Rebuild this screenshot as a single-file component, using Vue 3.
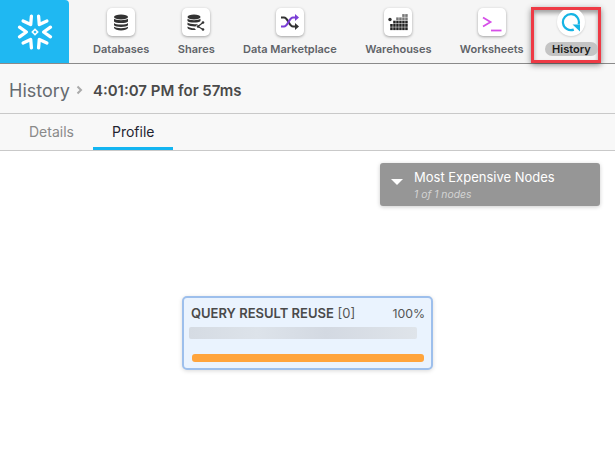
<script setup>
const items = [
  { name: 'Databases', icon: 'db' },
  { name: 'Shares', icon: 'share' },
  { name: 'Data Marketplace', icon: 'market' },
  { name: 'Warehouses', icon: 'wh' },
  { name: 'Worksheets', icon: 'ws' },
]
const cols = [2, 3, 4, 4, 5, 5]
</script>

<template>
  <div class="page">
    <nav class="nav">
      <div class="logo">
        <svg width="38" height="38" viewBox="-19 -19 38 38">
          <path
            v-for="a in [30, 90, 150, 210, 270, 330]"
            :key="a"
            :transform="`rotate(${a})`"
            d="M-4.8 -15.5 L0 -8.6 L4.8 -15.5"
            fill="none"
            stroke="#fff"
            stroke-width="3.3"
            stroke-linecap="round"
            stroke-linejoin="round"
          />
          <path d="M0 -3.8 L3.8 0 L0 3.8 L-3.8 0 Z M0 -1.6 L-1.6 0 L0 1.6 L1.6 0 Z" fill="#fff" fill-rule="evenodd" />
        </svg>
      </div>
      <div class="callout-shade"></div>
      <div class="items">
        <div v-for="item in items" :key="item.name" class="item">
          <div class="tile">
            <svg v-if="item.icon === 'db'" width="16" height="17" viewBox="0 0 16 17">
              <ellipse cx="8" cy="3" rx="7" ry="2.6" fill="#333" />
              <path d="M1 4.8 C2.5 6.6 13.5 6.6 15 4.8 V7.4 C13.5 9.6 2.5 9.6 1 7.4 Z M1 9 C2.5 11 13.5 11 15 9 V11.3 C13.5 13.4 2.5 13.4 1 11.3 Z M1 12.8 C2.5 14.6 13.5 14.6 15 12.8 V14 C13.5 17.2 2.5 17.2 1 14 Z" fill="#333" />
            </svg>
            <svg v-else-if="item.icon === 'share'" width="18" height="17" viewBox="0 0 18 17">
              <ellipse cx="7" cy="3" rx="6.5" ry="2.6" fill="#333" />
              <path d="M.5 4.8 C2 6.6 12 6.6 13.5 4.8 V7 C12 9 2 9 .5 7 Z M.5 8.6 C2 10.4 9 10.6 11 10 L8.5 12.5 C5 12.6 2 12 .5 10.8 Z M.5 12.4 C2 13.6 5 14.2 7.5 14.2 L9 16 C5 16.4 1.5 15.6 .5 14 Z" fill="#333" />
              <path d="M16 8.5 L11 12.5 L16 15.5" fill="none" stroke="#333" stroke-width="1.2" />
              <circle cx="16" cy="8.5" r="1.3" fill="#333" /><circle cx="11" cy="12.5" r="1.3" fill="#333" /><circle cx="16" cy="15.5" r="1.3" fill="#333" />
            </svg>
            <svg v-else-if="item.icon === 'market'" width="20" height="18" viewBox="0 0 20 18" fill="none" stroke-width="2.2">
              <path d="M1 4.5 H4 C8 4.5 9 13.5 13 13.5 H17" stroke="#333" />
              <path d="M15 10 L19 13.5 L15 17 Z" fill="#333" />
              <path d="M1 13.5 H4 C8 13.5 9 4.5 13 4.5 H17" stroke="#7b3fd6" />
              <path d="M15 1 L19 4.5 L15 8 Z" fill="#7b3fd6" />
            </svg>
            <svg v-else-if="item.icon === 'wh'" width="20" height="18" viewBox="0 0 20 18">
              <circle cx="2" cy="6.5" r="1.7" fill="#333" />
              <g v-for="(h, i) in cols" :key="i">
                <rect
                  v-for="r in h"
                  :key="r"
                  :x="2.2 + i * 3"
                  :y="17.6 - r * 3.3"
                  width="2.5"
                  height="2.8"
                  :fill="r > 3 ? '#777' : '#222'"
                />
              </g>
            </svg>
            <svg v-else class="ws-icon" width="20" height="16" viewBox="0 0 20 16" fill="none" stroke="#d64fe8" stroke-width="1.8">
              <path d="M1 1.5 L8.5 6 L1 10.5" />
              <path d="M9 14.5 H19.5" />
            </svg>
          </div>
          <span class="label">{{ item.name }}</span>
        </div>
        <div class="item active">
          <div class="tile round">
            <svg width="20" height="20" viewBox="0 0 20 20" fill="none">
              <path d="M12.8 17.6 A8 8 0 1 1 17.6 12.4" stroke="#16b4e4" stroke-width="2.2" />
              <path d="M11.5 12.5 H19 V19.5 Z" fill="#16b4e4" />
            </svg>
          </div>
          <span class="label pill">History</span>
        </div>
      </div>
      <div class="callout"></div>
    </nav>

    <header class="crumb">
      <span class="crumb-root">History</span>
      <svg class="crumb-sep" width="7" height="10" viewBox="0 0 7 10" fill="none"><path d="M1.5 1.5 L5 5 L1.5 8.5" stroke="#aaa" stroke-width="2" /></svg>
      <span class="crumb-title">4:01:07 PM for 57ms</span>
    </header>

    <div class="tabs">
      <div class="tab">Details</div>
      <div class="tab current">Profile</div>
    </div>

    <main class="canvas">
      <div class="expensive">
        <span class="tri"></span>
        <div>
          <div class="exp-title">Most Expensive Nodes</div>
          <div class="exp-sub">1 of 1 nodes</div>
        </div>
      </div>
      <div class="node">
        <div class="node-head">
          <span class="node-name"><b>QUERY RESULT REUSE</b> [0]</span>
          <span>100%</span>
        </div>
        <div class="node-blur"></div>
        <div class="node-bar"></div>
      </div>
    </main>
  </div>
</template>

<style>
html, body { margin: 0; background: #fff; }
</style>

<style scoped>
.page {
  width: 615px;
  height: 469px;
  overflow: hidden;
  font-family: Inter, "Liberation Sans", sans-serif;
  display: flex;
  flex-direction: column;
  background: #fff;
}
.nav {
  position: relative;
  flex: none;
  height: 63px;
  display: flex;
  background: #f5f5f5;
  border-bottom: 1px solid #8a8a8a;
}
.logo {
  width: 69px;
  background: #1fb8f2;
  border-top-right-radius: 4px;
  display: flex;
  align-items: center;
  justify-content: center;
}
.items {
  position: relative;
  z-index: 1;
  display: flex;
  gap: 28.4px;
  padding-left: 24px;
}
.item {
  display: flex;
  flex-direction: column;
  align-items: center;
  padding-top: 8px;
}
.item.active { margin-left: -7px; }
.tile {
  width: 28px;
  height: 28px;
  background: #fff;
  border-radius: 5px;
  box-shadow: 0 1px 3px rgba(0, 0, 0, .35);
  display: flex;
  align-items: center;
  justify-content: center;
}
.tile.round {
  border-radius: 50%;
  box-shadow: 0 1px 2px rgba(0, 0, 0, .15);
}
.ws-icon { margin-top: 3px; }
.label {
  margin-top: 6px;
  font-size: 11px;
  line-height: 14px;
  font-weight: 600;
  color: #5f6368;
  white-space: nowrap;
}
.pill {
  color: #1b1b1b;
  background: #c4c4c4;
  border-radius: 8px;
  padding: 0 7px;
}
.callout-shade {
  position: absolute;
  left: 534px;
  top: 10px;
  width: 64px;
  height: 50px;
  box-shadow: inset 0 3px 4px rgba(0, 0, 0, .35);
}
.callout {
  position: absolute;
  z-index: 2;
  left: 531px;
  top: 7px;
  width: 64px;
  height: 50px;
  border: 3px solid #ee3a45;
  box-shadow: 0 2px 6px rgba(0, 0, 0, .45);
}
.crumb {
  flex: none;
  height: 50px;
  box-sizing: border-box;
  display: flex;
  align-items: center;
  padding: 3px 0 0 9px;
  background: #f8f8f8;
  border-bottom: 1px solid #c9c9c9;
}
.crumb-root {
  font-size: 18px;
  color: #666b70;
}
.crumb-sep { margin: 0 10px 0 6px; }
.crumb-title {
  font-size: 15px;
  font-weight: 600;
  color: #4a4a4a;
}
.tabs {
  flex: none;
  height: 37px;
  box-sizing: border-box;
  display: flex;
  padding-left: 10px;
  background: #f8f8f8;
  border-bottom: 1px solid #c9c9c9;
}
.tab {
  padding: 0 19px;
  font-size: 14px;
  line-height: 36px;
  color: #8a8a8a;
  height: 36px;
  box-sizing: border-box;
}
.tab.current {
  color: #1f2430;
  border-bottom: 3px solid #13b5f1;
}
.canvas {
  position: relative;
  flex: 1;
  background: #fff;
}
.expensive {
  position: absolute;
  left: 380px;
  top: 12px;
  width: 220px;
  height: 43px;
  box-sizing: border-box;
  background: #969696;
  border-radius: 3px;
  box-shadow: 0 1px 4px rgba(0, 0, 0, .2);
  display: flex;
  align-items: flex-start;
  color: #fff;
}
.tri {
  margin: 16px 11px 0 11px;
  width: 0;
  height: 0;
  border-left: 6px solid transparent;
  border-right: 6px solid transparent;
  border-top: 6px solid #fff;
}
.exp-title {
  margin-top: 6px;
  font-size: 13px;
  line-height: 17px;
  color: #fff;
}
.exp-sub {
  margin-top: 2px;
  font-size: 10.4px;
  line-height: 13px;
  font-style: italic;
  color: #d4d4d4;
}
.node {
  position: absolute;
  left: 182px;
  top: 145px;
  width: 251px;
  height: 74px;
  box-sizing: border-box;
  border: 2px solid #9dbfec;
  border-radius: 5px;
  background: #eaf3fe;
  box-shadow: 0 1px 4px rgba(0, 0, 0, .15);
  padding: 0 6px 0 5px;
}
.node-head {
  display: flex;
  justify-content: space-between;
  align-items: baseline;
  margin: 7px 0 0 2px;
  font-size: 12.3px;
  line-height: 16px;
  color: #555;
}
.node-name { font-size: 13px; }
.node-head b { font-weight: 600; color: #4a4a4a; }
.node-blur {
  margin-top: 5px;
  width: 228px;
  height: 12px;
  border-radius: 2px;
  background: linear-gradient(90deg, #d5dbe3, #dde3ea 30%, #d3d9e2 60%, #dfe4ea);
}
.node-bar {
  margin: 15px 0 0 3px;
  width: 232px;
  height: 8px;
  border-radius: 3px;
  background: #ffa43c;
}
</style>
